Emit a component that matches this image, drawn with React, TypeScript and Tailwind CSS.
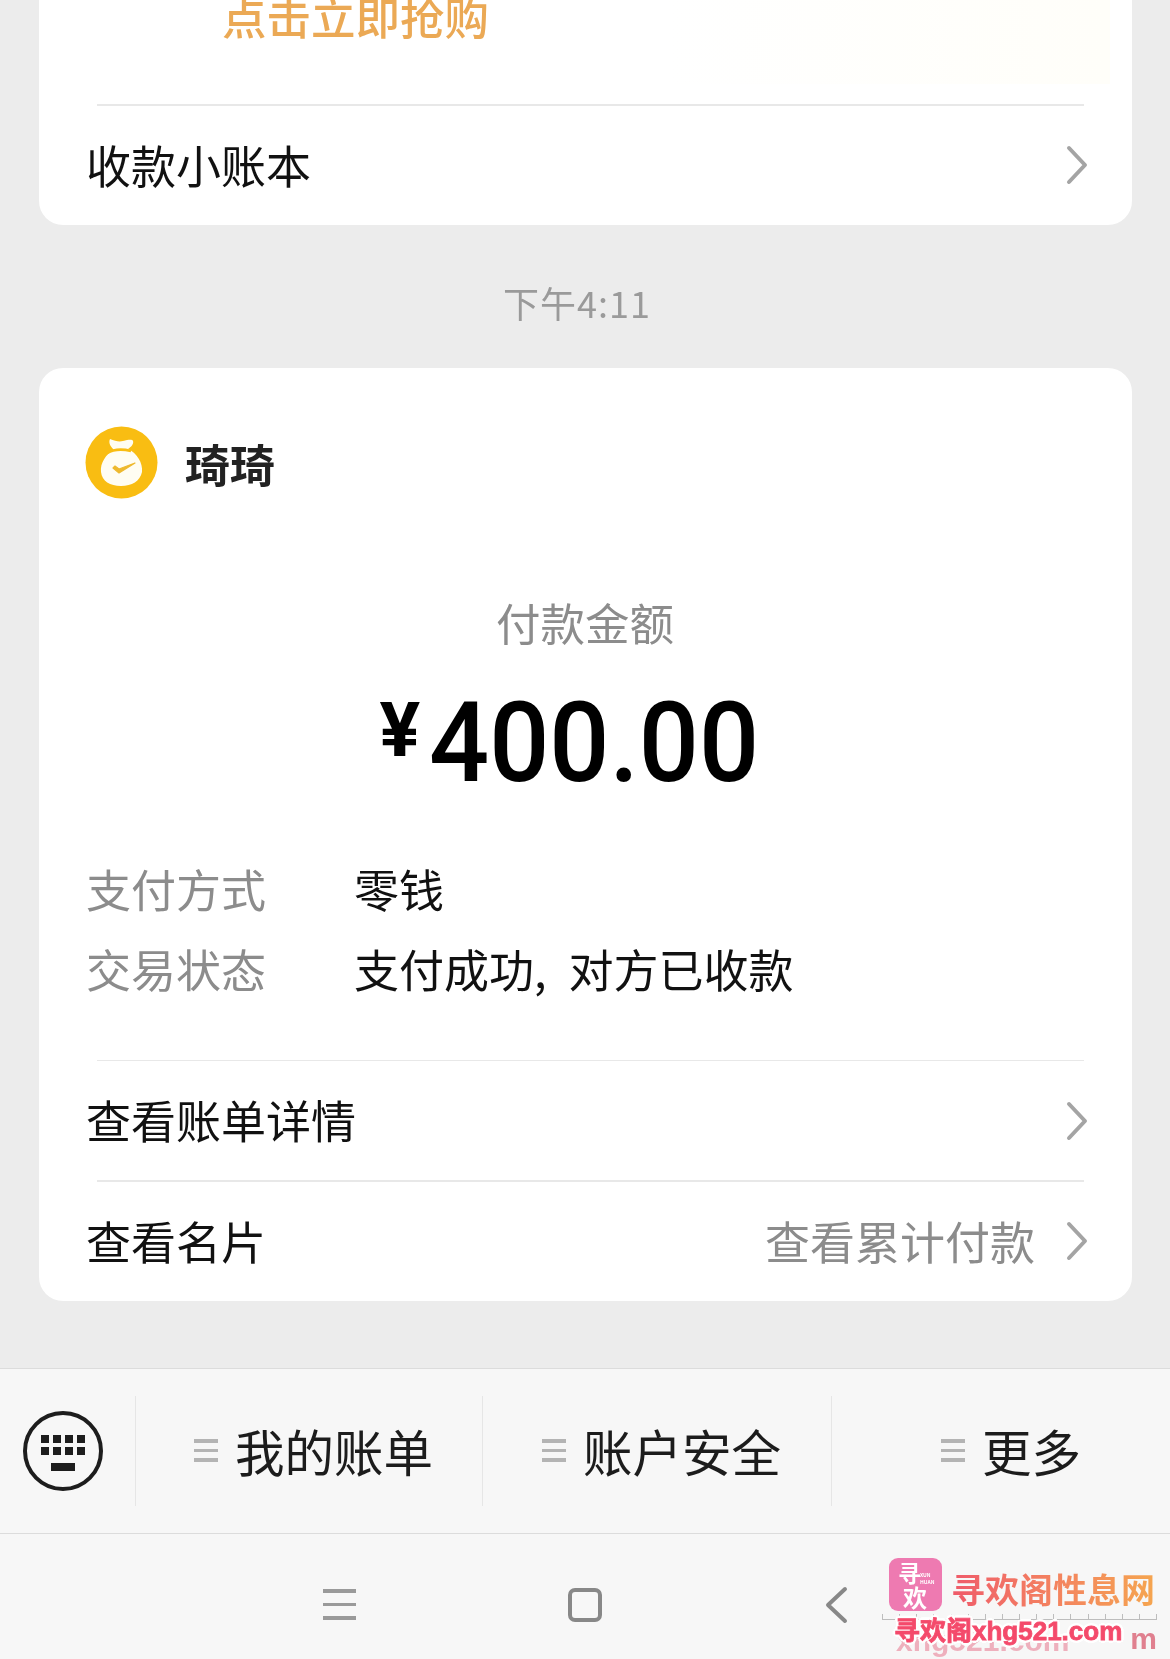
import React from "react";

const font = "font-['Noto_Sans_CJK_SC','Noto_Sans',sans-serif]";

function Chevron() {
  return (
    <svg width="22" height="40" viewBox="0 0 22 40" fill="none" className="shrink-0">
      <path d="M3 3 L19 20 L3 37" stroke="#a4a4a4" strokeWidth="4" strokeLinecap="round" strokeLinejoin="round" />
    </svg>
  );
}

function Row({ label, right, h }: { label: string; right?: string; h: string }) {
  return (
    <div className={`flex items-center pl-[47px] pr-[44px] ${h}`}>
      <span className="pb-[2px] text-[45px] leading-none text-[#111]">{label}</span>
      {right ? <span className="ml-auto mr-[31px] pb-[2px] text-[45px] leading-none text-[#8c8c8c]">{right}</span> : <span className="ml-auto" />}
      <Chevron />
    </div>
  );
}

function Divider() {
  return <div className="ml-[58px] mr-[48px] h-[1.5px] bg-[#e8e8e8]" />;
}

function Avatar() {
  return (
    <svg width="73" height="73" viewBox="0 0 73 73" className="shrink-0">
      <circle cx="36.5" cy="36.5" r="36" fill="#f9bd12" />
      <path d="M25 13 C30 15 34 16 38 15 C43 14 47 13 48 15 C49 18 46 21 43 23 C52 27 58 37 57 46 C55 55 47 60 36 60 C25 60 17 55 16 46 C15 37 21 28 29 24 C26 21 23 17 25 13 Z" fill="#fffdf2" />
      <path d="M22 27 C29 23 38 23 46 25" stroke="#f9bd12" strokeWidth="2.6" fill="none" />
      <path d="M28 42 L34 47 L50 37 L34 43 L30 40 Z" fill="#eeb92e" stroke="#eeb92e" strokeWidth="1.2" strokeLinejoin="round" />
    </svg>
  );
}

function Keyboard() {
  const cells = [0, 1, 2, 3];
  return (
    <svg width="80" height="80" viewBox="0 0 80 80" className="shrink-0">
      <circle cx="40" cy="40" r="38" fill="none" stroke="#1d1d1d" strokeWidth="4" />
      {cells.map((i) => (
        <rect key={`a${i}`} x={18 + i * 12} y="24" width="8" height="8" fill="#1d1d1d" />
      ))}
      {cells.map((i) => (
        <rect key={`b${i}`} x={18 + i * 12} y="36" width="8" height="8" fill="#1d1d1d" />
      ))}
      <rect x="28" y="52" width="24" height="8" fill="#1d1d1d" />
    </svg>
  );
}

function TinyMenu() {
  return (
    <span className="flex w-[24px] shrink-0 flex-col gap-[6px]">
      <span className="h-[3.5px] bg-[#b4b4b4]" />
      <span className="h-[3.5px] bg-[#b4b4b4]" />
      <span className="h-[3.5px] bg-[#b4b4b4]" />
    </span>
  );
}

function Tab({ label, w, gap, pl }: { label: string; w: string; gap: string; pl: string }) {
  return (
    <div className={`flex h-[110px] items-center border-l-[1.5px] border-[#e6e6e6] ${w} ${pl} ${gap}`}>
      <TinyMenu />
      <span className="text-[49.5px] leading-none text-[#1c1c1c]">{label}</span>
    </div>
  );
}

const ticks = Array.from({ length: 17 }, (_, i) => i);

export default function App() {
  return (
    <div className={`relative h-[1659px] w-[1170px] overflow-hidden bg-[#ececec] blur-[0.4px] ${font}`}>
      {/* first card, scrolled past the top */}
      <div className="-mt-[70px] ml-[39px] mr-[38px] rounded-b-[24px] bg-white">
        <div className="h-[174px] pt-[64px]">
          <div className="ml-[183px] h-[90px] w-[888px] bg-gradient-to-r from-white via-white to-[#fffef9]">
            <span className="block text-[44.5px] font-medium leading-none text-[#eba955]">点击立即抢购</span>
          </div>
        </div>
        <Divider />
        <Row label="收款小账本" h="h-[119px]" />
      </div>

      <div className="flex h-[143px] items-center justify-center pb-[3px] pl-[6px] pr-[22px] pt-[15px]">
        <span className="text-[36px] leading-none tracking-[1px] text-[#9a9a9a]">下午4:11</span>
      </div>

      {/* payment card */}
      <div className="ml-[39px] mr-[38px] rounded-[24px] bg-white">
        <div className="flex items-center gap-[27px] pl-[46px] pt-[58px]">
          <Avatar />
          <span className="pt-[2px] text-[45px] font-bold leading-none text-[#222]">琦琦</span>
        </div>

        <div className="mt-[94px] flex justify-center pr-[1px]">
          <span className="text-[44.5px] leading-[58px] text-[#8c8c8c]">付款金额</span>
        </div>

        <div className="mt-[42px] flex h-[100px] items-center justify-center pr-[32px] font-['Roboto',sans-serif] text-black">
          <span className="mr-[9px] -mt-[26px] text-[76px] font-bold leading-none">¥</span>
          <span className="-mr-[19px] origin-left scale-x-[0.945] text-[112px] font-medium leading-none">400.00</span>
        </div>

        <div className="mt-[67px] flex flex-col gap-[22px] pl-[47px]">
          <div className="flex items-center">
            <span className="w-[268px] text-[45px] leading-[58px] text-[#8c8c8c]">支付方式</span>
            <span className="text-[45px] leading-[58px] text-[#111]">零钱</span>
          </div>
          <div className="flex items-center">
            <span className="w-[268px] text-[45px] leading-[58px] text-[#8c8c8c]">交易状态</span>
            <span className="text-[45px] leading-[58px] text-[#111] [word-spacing:12px]">支付成功, 对方已收款</span>
          </div>
        </div>

        <div className="mt-[62px]">
          <Divider />
        </div>
        <Row label="查看账单详情" h="h-[119px]" />
        <Divider />
        <Row label="查看名片" right="查看累计付款" h="h-[119px]" />
      </div>

      {/* action bar */}
      <div className="mt-[67px] flex h-[166px] items-center border-y-[1.5px] border-[#dcdcdc] bg-[#f7f7f7]">
        <div className="flex w-[135px] justify-center pr-[10px]">
          <Keyboard />
        </div>
        <Tab label="我的账单" w="w-[347px]" pl="pl-[58px]" gap="gap-[17px]" />
        <Tab label="账户安全" w="w-[349px]" pl="pl-[59px]" gap="gap-[17px]" />
        <Tab label="更多" w="w-[339px]" pl="pl-[109px]" gap="gap-[17px]" />
      </div>

      {/* system navigation */}
      <div className="flex h-[140px] items-center bg-[#f7f7f7] pt-[17px] pb-[15px]">
        <div className="ml-[323px] flex w-[33px] flex-col gap-[10px]">
          <span className="h-[3.5px] bg-[#9a9a9a]" />
          <span className="h-[3.5px] bg-[#9a9a9a]" />
          <span className="h-[3.5px] bg-[#9a9a9a]" />
        </div>
        <div className="ml-[212px] h-[34px] w-[34px] rounded-[7px] border-[4px] border-[#888]" />
        <svg width="24" height="38" viewBox="0 0 24 38" className="ml-[222px]" fill="none">
          <path d="M21 3 L4 19 L21 35" stroke="#888" strokeWidth="4" strokeLinecap="round" strokeLinejoin="round" />
        </svg>
      </div>

      {/* site watermark */}
      <div className="absolute left-[882px] top-[1553px] h-[106px] w-[288px] font-['Liberation_Serif','Noto_Sans_CJK_SC',serif]">
        <div className="absolute left-[7px] top-[5px] h-[53px] w-[53px] rounded-[9px] bg-[#ee7ab1] font-['Noto_Sans_CJK_SC',sans-serif] font-bold text-white">
          <span className="absolute left-[9px] top-[2px] text-[23px] leading-[24px]">寻</span>
          <span className="absolute left-[14px] top-[26px] text-[24px] leading-[25px]">欢</span>
          <span className="absolute left-[31px] top-[14px] text-[5px] leading-[6px]">XUN</span>
          <span className="absolute left-[31px] top-[21px] text-[5px] leading-[6px]">HUAN</span>
        </div>
        <div className="absolute left-[69px] top-[19px] whitespace-nowrap bg-gradient-to-r from-[#ef5a6a] to-[#f5a54f] bg-clip-text text-[34px] font-bold leading-[40px] text-transparent">
          寻欢阁性息网
        </div>
        <div className="absolute left-0 right-[13px] top-[66px] flex h-[6px] items-start justify-between border-t border-[#bdbdbd]">
          {ticks.map((i) => (
            <span key={i} className="-mt-[6px] h-[6px] w-[1px] bg-[#bdbdbd]" />
          ))}
        </div>
        <div className="absolute left-[14px] top-[73px] whitespace-nowrap font-['Liberation_Sans',sans-serif] text-[30px] font-bold leading-[30px] text-[#eeb0bd]">
          xhg521.com
        </div>
        <div className="absolute right-[13px] top-[71px] font-['Liberation_Sans',sans-serif] text-[30px] font-bold leading-[30px] text-[#e0808f]">m</div>
        <div className="absolute left-[12px] top-[63px] whitespace-nowrap font-['Liberation_Sans','Noto_Sans_CJK_SC',sans-serif] text-[26px] font-bold leading-[30px] text-[#f44a6b] [-webkit-text-stroke:0.8px_#f44a6b] [text-shadow:-2px_-2px_0_#fff,2px_-2px_0_#fff,-2px_2px_0_#fff,2px_2px_0_#fff,0_3px_0_#fff,0_-3px_0_#fff,3px_0_0_#fff,-3px_0_0_#fff]">
          寻欢阁xhg521.com
        </div>
      </div>
    </div>
  );
}
